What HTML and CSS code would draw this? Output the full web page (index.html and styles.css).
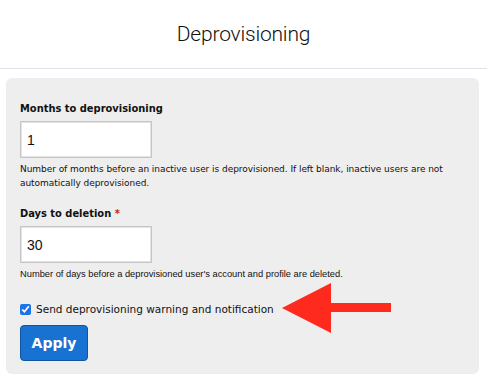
FILE: index.html
```html
<!DOCTYPE html>
<html>
<head>
<meta charset="utf-8">
<link rel="stylesheet" href="styles.css">
</head>
<body>
<header class="top">
  <h1 class="title">Deprovisioning</h1>
</header>
<form class="panel">
  <div class="field">
    <label class="label">Months to deprovisioning</label>
    <input class="input" type="text" value="1">
    <p class="help">Number of months before an inactive user is deprovisioned. If left blank, inactive users are not automatically deprovisioned.</p>
  </div>
  <div class="field">
    <label class="label">Days to deletion <span class="req">*</span></label>
    <input class="input" type="text" value="30">
    <p class="help help-alt">Number of days before a deprovisioned user's account and profile are deleted.</p>
  </div>
  <div class="check-row">
    <label class="check"><input type="checkbox" class="cb" checked> Send deprovisioning warning and notification</label>
    <svg class="arrow" width="110" height="52" viewBox="0 0 110 52"><polygon points="0,25 49,0 49,20 109,20 109,29 49,29 49,50" fill="#fe2a1e"/></svg>
  </div>
  <button type="button" class="btn">Apply</button>
</form>
</body>
</html>
```
FILE: styles.css
```css
html, body { margin: 0; padding: 0; background: #fff; }
body { width: 487px; height: 380px; overflow: hidden; }
.top {
  height: 68px;
  border-bottom: 1px solid #dfe2e8;
  display: flex;
  align-items: center;
  justify-content: center;
}
.title {
  margin: 0;
  font-family: Roboto, "Liberation Sans", sans-serif;
  font-weight: 300;
  font-size: 21px;
  color: #111;
  letter-spacing: -0.2px;
}
.panel {
  box-sizing: border-box;
  margin: 9px 8px 0 6px;
  background: #eeeeee;
  border-radius: 6px;
  padding: 24px 14px 0 14px;
  height: 296px;
}
.label {
  display: block;
  font-family: "DejaVu Sans Condensed", "DejaVu Sans", sans-serif;
  font-weight: bold;
  font-size: 11px;
  line-height: 14px;
  color: #111;
  margin: 0 0 5px 0;
}
.req { color: #d0201b; font-weight: bold; }
.input {
  display: block;
  box-sizing: border-box;
  width: 132px;
  height: 37px;
  border: 1px solid #c5c5c5;
  box-shadow: inset 0 0 0 1px #e4e4e4;
  background: #fff;
  padding: 0 6px;
  font-family: "Liberation Sans", sans-serif;
  font-size: 14px;
  color: #111;
  margin: 0;
  outline: none;
}
.help {
  margin: 4px 0 17px 0;
  font-family: "DejaVu Sans", sans-serif;
  font-size: 9px;
  line-height: 14px;
  color: #111;
  letter-spacing: -0.05px;
}
.help-alt {
  font-family: "Liberation Sans", sans-serif;
  font-size: 9.3px;
  letter-spacing: 0;
  margin-bottom: 20px;
}
.check-row {
  display: flex;
  align-items: center;
  height: 16px;
}
.check {
  display: flex;
  align-items: center;
  font-family: "DejaVu Sans", sans-serif;
  font-size: 10.5px;
  color: #111;
}
.cb {
  margin: 0 5px 0 0;
  width: 11px;
  height: 11px;
  accent-color: #1a73e8;
}
.arrow { margin-left: 8px; flex: none; }
.btn {
  display: block;
  margin-top: 8px;
  width: 68px;
  height: 36px;
  background: #1872d1;
  border: 1px solid #0e579e;
  border-radius: 4px;
  color: #fff;
  font-family: "DejaVu Sans", sans-serif;
  font-weight: bold;
  font-size: 14px;
  padding: 0;
}
```
